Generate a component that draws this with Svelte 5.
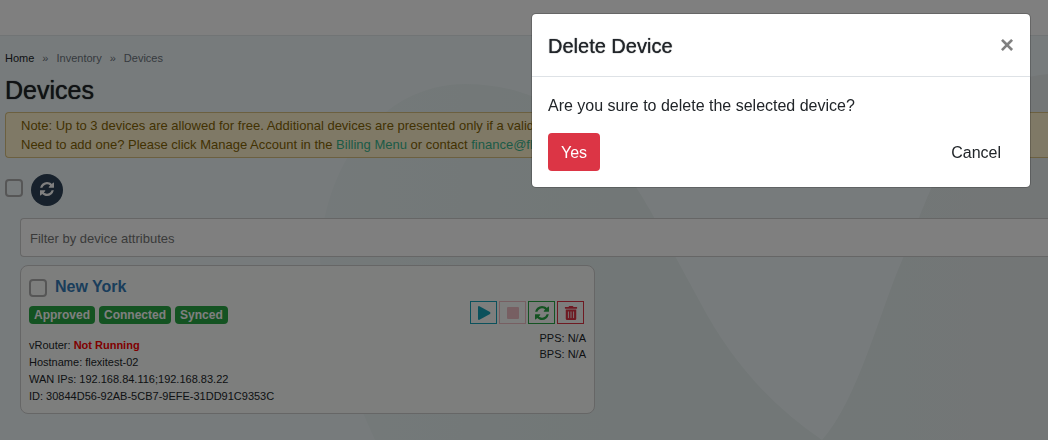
<script>
  const crumbs = ["Inventory", "Devices"];
  const labels = ["Approved", "Connected", "Synced"];

  const device = {
    name: "New York",
    status: "Not Running",
    hostname: "flexitest-02",
    ips: "192.168.84.116;192.168.83.22",
    id: "30844D56-92AB-5CB7-9EFE-31DD91C9353C",
    pps: "N/A",
    bps: "N/A",
  };

  let filter = $state("");
  let allSelected = $state(false);
  let selected = $state(false);
  let showDelete = $state(true);

  function closeModal() {
    showDelete = false;
  }
</script>

{#snippet syncIcon()}
  <svg viewBox="0 128 1536 1536" width="14" height="14" aria-hidden="true">
    <path
      d="M1511 1056q0 5-1 7-64 268-268 434.5t-478 166.5q-146 0-282.5-55t-243.5-157l-129 129q-19 19-45 19t-45-19-19-45v-448q0-26 19-45t45-19h448q26 0 45 19t19 45-19 45l-137 137q71 66 161 102t187 36q134 0 250-65t186-179q11-17 53-117 8-23 30-23h192q13 0 22.5 9.5t9.5 22.5zm25-800v448q0 26-19 45t-45 19h-448q-26 0-45-19t-19-45 19-45l138-138q-148-137-349-137-134 0-250 65t-186 179q-11 17-53 117-8 23-30 23h-199q-13 0-22.5-9.5t-9.5-22.5v-7q65-268 270-434.5t480-166.5q146 0 284 55.5t245 156.5l130-129q19-19 45-19t45 19 19 45z"
    />
  </svg>
{/snippet}

<div class="page">
  <svg class="backdrop-art" width="1048" height="440" aria-hidden="true">
    <defs>
      <linearGradient id="hills">
        <stop offset="0" stop-color="#e9f3f4" />
        <stop offset="0.4" stop-color="#e4efee" />
        <stop offset="0.7" stop-color="#e4efee" />
        <stop offset="1" stop-color="#e7eced" />
      </linearGradient>
    </defs>
    <path
      fill="url(#hills)"
      d="M375 440Q320 320 320 258C322 170 378 84 465 84C570 84 625 165 650 210L700 302Q745 388 822 440C858 400 880 310 903 258C935 180 965 80 1048 74V440Z"
    />
  </svg>

  <header></header>

  <main>
    <nav aria-label="Breadcrumb">
      <a href="#home">Home</a>
      {#each crumbs as crumb}
        <span class="sep">»</span>
        <span>{crumb}</span>
      {/each}
    </nav>

    <h1>Devices</h1>

    <div class="note">
      Note: Up to 3 devices are allowed for free. Additional devices are presented only if a valid<br />
      Need to add one? Please click Manage Account in the <a href="#billing">Billing Menu</a> or contact
      <a href="#finance">finance@fle</a>
    </div>

    <div class="toolbar">
      <input type="checkbox" aria-label="Select all devices" bind:checked={allSelected} />
      <button class="refresh" aria-label="Refresh">{@render syncIcon()}</button>
    </div>

    <div class="list">
      <input
        class="filter"
        type="text"
        placeholder="Filter by device attributes"
        aria-label="Filter by device attributes"
        bind:value={filter}
      />

      <section class="card">
        <div>
          <div class="name">
            <input type="checkbox" id="device" bind:checked={selected} />
            <label for="device">{device.name}</label>
          </div>
          <div class="badges">
            {#each labels as label}
              <span class="badge">{label}</span>
            {/each}
          </div>
          <div class="info">
            <div>vRouter: <b>{device.status}</b></div>
            <div>Hostname: {device.hostname}</div>
            <div>WAN IPs: {device.ips}</div>
            <div>ID: {device.id}</div>
          </div>
        </div>

        <div class="side">
          <div class="actions">
            <button class="start" aria-label="Start">
              <svg viewBox="0 0 14 14" width="14" height="14"><path d="M1 1Q1 0 2 0L13 6Q14 7 13 8L2 14Q1 14 1 13Z" /></svg>
            </button>
            <button class="stop" aria-label="Stop" disabled>
              <svg viewBox="0 0 14 14" width="14" height="14"><rect x="1" y="1" width="12" height="12" rx="1" /></svg>
            </button>
            <button class="sync" aria-label="Sync">{@render syncIcon()}</button>
            <button class="delete" aria-label="Delete" onclick={() => (showDelete = true)}>
              <svg viewBox="0 0 448 512" width="14" height="14">
                <path
                  d="M32 464a48 48 0 0 0 48 48h288a48 48 0 0 0 48-48V128H32zm272-256a16 16 0 0 1 32 0v224a16 16 0 0 1-32 0zm-96 0a16 16 0 0 1 32 0v224a16 16 0 0 1-32 0zm-96 0a16 16 0 0 1 32 0v224a16 16 0 0 1-32 0zM432 32H312l-9.4-18.7A24 24 0 0 0 281.1 0H166.8a23.72 23.72 0 0 0-21.4 13.3L136 32H16A16 16 0 0 0 0 48v32a16 16 0 0 0 16 16h416a16 16 0 0 0 16-16V48a16 16 0 0 0-16-16z"
                />
              </svg>
            </button>
          </div>
          <div class="rates">
            <div>PPS: {device.pps}</div>
            <div>BPS: {device.bps}</div>
          </div>
        </div>
      </section>
    </div>
  </main>
</div>

{#if showDelete}
  <div class="overlay">
    <div class="modal" role="dialog" aria-modal="true" aria-labelledby="modal-title">
      <div class="modal-header">
        <h2 id="modal-title">Delete Device</h2>
        <button class="close" aria-label="Close" onclick={closeModal}>×</button>
      </div>
      <div class="modal-body">
        <p>Are you sure to delete the selected device?</p>
        <div class="modal-buttons">
          <button class="yes" onclick={closeModal}>Yes</button>
          <button class="cancel" onclick={closeModal}>Cancel</button>
        </div>
      </div>
    </div>
  </div>
{/if}

<style>
  :global(body) {
    font-family: "Liberation Sans", Arial, sans-serif;
    color: #212529;
    background: #eff7f9;
  }

  * {
    box-sizing: border-box;
  }

  button,
  input {
    font-family: inherit;
    margin: 0;
  }

  a {
    text-decoration: none;
  }

  .page {
    position: relative;
    min-height: 100vh;
    overflow: hidden;
  }

  .backdrop-art {
    position: absolute;
    top: 0;
    left: 0;
  }

  header {
    position: relative;
    height: 36px;
    background: #fff;
    border-bottom: 1px solid #e2e8ea;
  }

  main {
    position: relative;
    padding: 14px 0 0 5px;
  }

  nav {
    display: flex;
    align-items: center;
    gap: 8px;
    font-size: 11px;
    line-height: 16px;
    color: #6c757d;
  }

  nav a {
    color: #212529;
  }

  .sep {
    font-size: 11px;
  }

  /* medium weight, between the regular and bold cuts */
  h1,
  h2 {
    font-weight: normal;
    text-shadow: 0 0 1px currentColor;
  }

  h1 {
    margin: 9px 0 7px;
    font-size: 25px;
    line-height: 30px;
  }

  .note {
    padding: 3px 15px;
    border: 1px solid #d8c180;
    border-right: 0;
    border-radius: 4px 0 0 4px;
    background: #fff3cd;
    color: #856404;
    font-size: 13px;
    line-height: 19px;
    white-space: nowrap;
  }

  .note a {
    color: #39b68f;
  }

  input[type="checkbox"] {
    appearance: none;
    width: 18px;
    height: 18px;
    border: 2px solid #adadad;
    border-radius: 4px;
  }

  input[type="checkbox"]:checked {
    background: #2f4358;
  }

  .toolbar {
    display: flex;
    align-items: center;
    gap: 8px;
    margin: 16px 0 12px;
  }

  .toolbar input {
    margin-bottom: 4px;
  }

  .refresh {
    display: grid;
    place-items: center;
    width: 32px;
    height: 32px;
    padding: 0 0 2px;
    border: 0;
    border-radius: 50%;
    background: #2f4358;
    fill: #fff;
  }

  .list {
    padding-left: 15px;
  }

  .filter {
    display: block;
    width: 100%;
    height: 39px;
    padding: 2px 9px 0;
    border: 1px solid #ccc;
    border-right: 0;
    border-radius: 4px 0 0 4px;
    background: #fff;
    font-size: 13px;
  }

  .filter::placeholder {
    color: #757575;
  }

  .card {
    display: flex;
    justify-content: space-between;
    max-width: 575px;
    margin-top: 8px;
    padding: 8px;
    border: 1px solid #ccc;
    border-radius: 8px;
    background: #fbfdfb;
  }

  .name {
    display: flex;
    align-items: center;
    gap: 8px;
    height: 28px;
  }

  .name label {
    padding-bottom: 2px;
    font-size: 16px;
    font-weight: bold;
    color: #337ab7;
  }

  .badges {
    display: flex;
    gap: 4px;
    margin-top: 4px;
  }

  .badge {
    padding: 1px 5px 0;
    border-radius: 4px;
    background: #28a745;
    color: #fff;
    font-size: 12px;
    font-weight: bold;
    line-height: 17px;
  }

  .info {
    margin-top: 13px;
    font-size: 11px;
    line-height: 17px;
  }

  .info b {
    color: #f00;
  }

  .side {
    padding-top: 27px;
  }

  .actions {
    display: flex;
    gap: 2px;
    padding-right: 2px;
  }

  .actions button {
    display: grid;
    place-items: center;
    width: 27px;
    height: 23px;
    padding: 0;
    border: 1px solid currentColor;
    background: none;
  }

  .actions svg {
    fill: currentColor;
  }

  .actions .start {
    color: #17a2b8;
  }

  .actions .stop {
    color: #eebfc4;
  }

  .actions .sync {
    color: #28a745;
  }

  .actions .delete {
    color: #dc3545;
  }

  .rates {
    margin-top: 6px;
    font-size: 11px;
    line-height: 16px;
    text-align: right;
  }

  .overlay {
    position: fixed;
    inset: 0;
    display: flex;
    justify-content: flex-end;
    align-items: flex-start;
    padding: 13px 17px;
    background: rgba(0, 0, 0, 0.5);
  }

  .modal {
    width: 100%;
    max-width: 500px;
    border: 1px solid rgba(0, 0, 0, 0.2);
    border-radius: 5px;
    background: #fff;
    background-clip: padding-box;
  }

  .modal-header {
    display: flex;
    justify-content: space-between;
    align-items: center;
    padding: 16px;
    border-bottom: 1px solid #dee2e6;
  }

  h2 {
    margin: 0;
    padding-top: 2px;
    font-size: 20px;
    line-height: 28px;
  }

  .close {
    padding: 0;
    border: 0;
    background: none;
    color: #808080;
    font-size: 24px;
    font-weight: bold;
    line-height: 24px;
  }

  .modal-body {
    padding: 17px 16px 16px;
  }

  .modal-body p {
    margin: 0 0 15px;
    line-height: 24px;
  }

  .modal-buttons {
    display: flex;
    justify-content: space-between;
  }

  .modal-buttons button {
    padding: 7px 12px 5px;
    border: 1px solid transparent;
    border-radius: 4px;
    font-size: 16px;
    line-height: 24px;
  }

  .modal-buttons .yes {
    background: #dc3545;
    color: #fff;
  }

  .modal-buttons .cancel {
    background: none;
    color: #212529;
  }
</style>
